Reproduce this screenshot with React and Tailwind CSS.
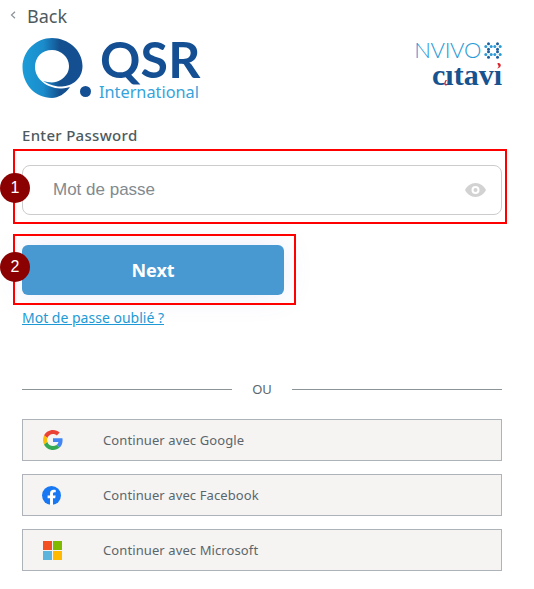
import React from 'react';

const font = "font-['Noto_Sans','Open_Sans',sans-serif]";

const QLogo = () => (
  <svg width="62" height="62" viewBox="0 0 62 62" className="shrink-0">
    <defs>
      <linearGradient id="ring" x1="0" y1="0" x2="1" y2="0">
        <stop offset="0" stopColor="#1b9dd9" />
        <stop offset="0.35" stopColor="#1b8ccb" />
        <stop offset="0.62" stopColor="#14508f" />
        <stop offset="1" stopColor="#134f92" />
      </linearGradient>
    </defs>
    <path
      fillRule="evenodd"
      d="M30 1C46 1 60.500 13 60.500 29C60.500 42 50 49 40 49.500C33 50 26 47 21 44C28 46 34 46 38.500 43C44 39.500 47 35 47 29C47 20 39 13 30 13C20 13 13 20 13 30C13 42 25 51 38 51.500C40 51.500 44 51 48 50C43 57 36 61 30 61C13 61 .500 47 .500 30C.500 14 14 1 30 1Z"
      fill="url(#ring)"
    />
  </svg>
);

const NvivoDots = () => (
  <svg width="18" height="17" viewBox="0 0 18 17" className="ml-[3px]">
    {[[4.500, 1.800], [1.800, 4.500], [7.200, 4.500], [4.500, 7.200], [13.500, 1.800], [10.800, 4.500], [16.200, 4.500], [13.500, 7.200], [4.500, 9.800], [1.800, 12.500], [7.200, 12.500], [4.500, 15.200], [13.500, 9.800], [10.800, 12.500], [16.200, 12.500], [13.500, 15.200]].map(([x, y]) => (
      <circle key={`${x}-${y}`} cx={x} cy={y} r="1.500" fill={x === 4.500 || x === 13.500 ? '#1e5f9e' : '#2b9ad6'} />
    ))}
  </svg>
);

const GoogleIcon = () => (
  <svg width="20" height="20" viewBox="0 0 48 48">
    <path fill="#EA4335" d="M24 9.500c3.540 0 6.710 1.220 9.210 3.600l6.850-6.850C35.900 2.380 30.470 0 24 0 14.620 0 6.510 5.380 2.560 13.220l7.980 6.190C12.430 13.720 17.740 9.500 24 9.500z" />
    <path fill="#4285F4" d="M46.980 24.550c0-1.570-.15-3.090-.38-4.550H24v9.020h12.940c-.58 2.960-2.260 5.480-4.780 7.180l7.730 6c4.510-4.180 7.090-10.360 7.090-17.650z" />
    <path fill="#FBBC05" d="M10.530 28.590c-.48-1.450-.76-2.990-.76-4.590s.27-3.140.76-4.590l-7.980-6.190C.92 16.460 0 20.120 0 24c0 3.880.92 7.540 2.560 10.780l7.970-6.190z" />
    <path fill="#34A853" d="M24 48c6.480 0 11.930-2.130 15.890-5.810l-7.730-6c-2.150 1.450-4.920 2.300-8.160 2.300-6.260 0-11.570-4.220-13.470-9.910l-7.980 6.190C6.510 42.620 14.620 48 24 48z" />
  </svg>
);

const FacebookIcon = () => (
  <svg width="19" height="19" viewBox="0 0 24 24">
    <circle cx="12" cy="12" r="12" fill="#1877f2" />
    <path fill="#fff" d="M16.670 15.470 17.200 12h-3.330V9.750c0-.95.470-1.870 1.960-1.870h1.510V4.920s-1.370-.23-2.680-.23c-2.740 0-4.530 1.660-4.530 4.670V12H7.080v3.470h3.050V23.850a12.100 12.100 0 0 0 3.740 0v-8.380h2.800z" />
  </svg>
);

const MicrosoftIcon = () => (
  <div className="grid grid-cols-[9px_9px] grid-rows-[9px_9px] gap-px w-[19px] h-[19px]">
    <span className="bg-[#f25022]" />
    <span className="bg-[#7fba00]" />
    <span className="bg-[#5cb3dc]" />
    <span className="bg-[#ffb900]" />
  </div>
);

const SocialButton = ({ icon, label, iconClass }) => (
  <button className="flex items-center h-[42px] w-full bg-[#f6f4f2] border border-[#adb3b8] text-[13px] tracking-[0.1px] text-[#5a666c]">
    <span className={`flex items-center justify-center w-5 ${iconClass}`}>{icon}</span>
    <span className="ml-10 pt-[2px]">{label}</span>
  </button>
);

const Badge = ({ n, className }) => (
  <span className={`absolute left-0 w-[30px] h-[30px] rounded-full bg-[#8b0000] text-white text-[16px] flex items-center justify-center font-['Liberation_Sans',sans-serif] ${className}`}>
    {n}
  </span>
);

export default function App() {
  return (
    <div className={`relative w-[534px] h-[589px] bg-white overflow-hidden ${font}`}>
      {/* Back */}
      <div className="flex items-center h-[26px] pt-[6px] pl-[10px] text-[#4d5a60]">
        <svg width="6" height="8" viewBox="0 0 6 8" className="-mt-[2px]">
          <path d="M5 .8 1.500 4 5 7.200" fill="none" stroke="#8b9398" strokeWidth="1.200" />
        </svg>
        <span className="ml-[11px] text-[18px] leading-none">Back</span>
      </div>

      <div className="w-[480px] ml-[22px]">
        {/* Logos */}
        <div className="flex justify-between h-[99px] pt-[11px]">
          <div className="relative flex items-start">
            <QLogo />
            <span className="absolute left-[58px] top-[49px] w-[11px] h-[11px] rounded-full bg-[#134f92]" />
            <div className="ml-4 -mt-[1px]">
              <div className="text-[#134f92] text-[50px] leading-[46px] font-bold font-['Lato',sans-serif] tracking-[0.2px]">QSR</div>
              <div className="text-[#35a3dc] text-[16.300px] leading-[18px] -ml-px mt-px">International</div>
            </div>
          </div>
          <div className="flex flex-col items-end pt-[3px]">
            <div className="flex items-center">
              <span className="text-[#2b9ad6] text-[22px] leading-[20px] font-['Lato',sans-serif] font-light tracking-[-0.3px]">NVIVO</span>
              <NvivoDots />
            </div>
            <div className="relative mt-[2px]">
              <span className="text-[#17538f] text-[30px] leading-[26px] font-bold font-['Liberation_Serif',serif] block">cıtavı</span>
              <svg width="70" height="26" viewBox="0 0 70 26" className="absolute right-0 top-0">
                <path d="M65.500 1c3 0 4.200 2.200 2.600 4-.7.8-1.800 1.300-3 1.600 1.200-1.100 1.700-1.900 1.400-2.900-.3-.6-1-1.200-1-2.700z" fill="#d8232a" />
                <path d="M15 18c-.9 2-2 3.200-1 4.200.6.500 1.300.4 2.100.1-.6 1-1.900 1.600-3 .9-1.300-.8-1-2.600.5-5.200z" fill="#d8232a" />
              </svg>
            </div>
          </div>
        </div>

        {/* Password */}
        <label className="block text-[15px] leading-[20px] tracking-[0.3px] text-[#4d5a60] font-medium">Enter Password</label>
        <div className="flex items-center justify-between h-[50px] mt-5 pl-[30px] pr-[15px] rounded-[8px] border border-[#cccccc] bg-white">
          <span className="font-['Liberation_Sans',sans-serif] text-[17px] text-[#828a8f]">Mot de passe</span>
          <svg width="21" height="14" viewBox="0 0 21 14">
            <path fillRule="evenodd" fill="#d2d2d2" d="M10.500 0C15 0 19 3 21 7c-2 4-6 7-10.500 7S2 11 0 7c2-4 6-7 10.500-7zm0 3a4 4 0 1 0 0 8 4 4 0 0 0 0-8zm0 2a2 2 0 1 1 0 4 2 2 0 0 1 0-4z" />
          </svg>
        </div>

        {/* Next */}
        <button className="block w-[262px] h-[50px] mt-[30px] rounded-[6px] bg-[#4898d2] text-white text-[18px] font-bold shadow-[0_0_30px_rgba(90,110,220,0.12)]">
          Next
        </button>
        <a href="#" className="block mt-[13px] text-[14px] leading-[20px] text-[#1d9ad6] underline">
          Mot de passe oublié ?
        </a>

        {/* Separator */}
        <div className="flex items-center gap-5 mt-[51px] text-[13px] text-[#5a666c]">
          <div className="flex-1 h-px bg-[#8d9498]" />
          <span className="leading-[20px]">OU</span>
          <div className="flex-1 h-px bg-[#8d9498]" />
        </div>

        {/* Social */}
        <div className="flex flex-col gap-[13px] mt-5">
          <SocialButton icon={<GoogleIcon />} label="Continuer avec Google" iconClass="ml-5" />
          <SocialButton icon={<FacebookIcon />} label="Continuer avec Facebook" iconClass="ml-[18px] mr-[2px]" />
          <SocialButton icon={<MicrosoftIcon />} label="Continuer avec Microsoft" iconClass="ml-[19px] mr-px" />
        </div>
      </div>

      {/* Annotations */}
      <div className="absolute left-[13px] top-[149px] w-[494px] h-[75px] border-2 border-[#ff0000]" />
      <div className="absolute left-[13px] top-[234px] w-[283px] h-[71px] border-2 border-[#ff0000]" />
      <Badge n="1" className="top-[173px]" />
      <Badge n="2" className="top-[252px]" />
    </div>
  );
}
